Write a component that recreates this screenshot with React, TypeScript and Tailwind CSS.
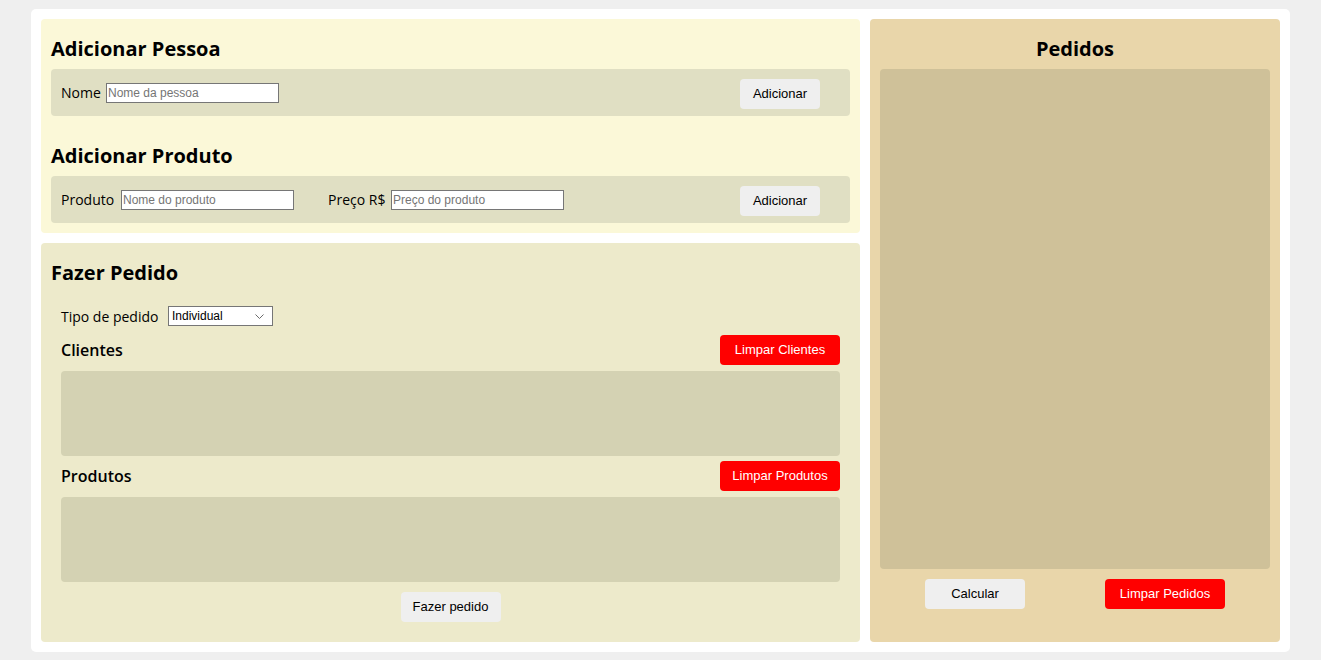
import React from 'react';

const font = { fontFamily: '"Open Sans", "Noto Sans", sans-serif' };

function Button({ label, red, width }: { label: string; red?: boolean; width: string }) {
  return (
    <button
      className={`h-[30px] ${width} shrink-0 rounded-[4px] text-[13px] font-['Liberation_Sans',Arial,sans-serif] ${
        red ? 'bg-[#ff0000] text-white' : 'bg-[#efefef] text-black'
      }`}
    >
      {label}
    </button>
  );
}

function TextInput({ placeholder }: { placeholder: string }) {
  return (
    <input
      type="text"
      placeholder={placeholder}
      className="h-[20px] w-[173px] border border-[#767676] bg-white px-[1px] text-[12px] font-['Liberation_Sans',Arial,sans-serif] text-black placeholder:text-[#757575] focus:outline-none"
    />
  );
}

export default function App() {
  return (
    <div className="min-h-[660px] bg-[#efefef] pt-[9px] pl-[31px]" style={font}>
      <div className="flex w-[1259px] gap-[10px] rounded-[5px] bg-white p-[10px]">
        {/* Left column */}
        <div className="flex w-[819px] flex-col gap-[10px]">
          <section className="rounded-[4px] bg-[#fbf8d8] p-[10px]">
            <h2 className="flex h-[40px] items-center text-[20px] font-bold">Adicionar Pessoa</h2>
            <div className="flex h-[47px] items-center rounded-[4px] bg-[#e0dfc3] pl-[10px] pr-[30px]">
              <label className="w-[45px] text-[14px]">Nome</label>
              <TextInput placeholder="Nome da pessoa" />
              <div className="ml-auto mt-[3px]">
                <Button label="Adicionar" width="w-[80px]" />
              </div>
            </div>

            <h2 className="mt-[20px] flex h-[40px] items-center text-[20px] font-bold">Adicionar Produto</h2>
            <div className="flex h-[47px] items-center rounded-[4px] bg-[#e0dfc3] pl-[10px] pr-[30px]">
              <label className="w-[60px] text-[14px]">Produto</label>
              <TextInput placeholder="Nome do produto" />
              <label className="ml-[34px] w-[63px] text-[14px]">Preço R$</label>
              <TextInput placeholder="Preço do produto" />
              <div className="ml-auto mt-[3px]">
                <Button label="Adicionar" width="w-[80px]" />
              </div>
            </div>
          </section>

          <section className="rounded-[4px] bg-[#edeacb] px-[10px] pt-[10px] pb-[20px]">
            <h2 className="flex h-[40px] items-center text-[20px] font-bold">Fazer Pedido</h2>
            <div className="flex flex-col px-[10px]">
              <div className="mt-[13px] flex h-[20px] items-center">
                <label className="w-[107px] text-[14px]">Tipo de pedido</label>
                <div className="relative flex">
                  <select className="block h-[20px] w-[105px] appearance-none border border-[#767676] bg-white pl-[3px] text-[12px] font-['Liberation_Sans',Arial,sans-serif]">
                    <option>Individual</option>
                    <option>Grupo</option>
                  </select>
                  <svg
                    className="pointer-events-none absolute right-[9px] top-[8px] h-[5px] w-[9px] text-[#6b6b6b]"
                    viewBox="0 0 9 5"
                    fill="none"
                    stroke="currentColor"
                    strokeWidth={1}
                  >
                    <path d="M0.5 0.5 4.5 4.5 8.5 0.5" />
                  </svg>
                </div>
              </div>

              <div className="mt-[9px] flex h-[30px] items-center justify-between">
                <h3 className="text-[16px] font-semibold">Clientes</h3>
                <Button label="Limpar Clientes" red width="w-[120px]" />
              </div>
              <div className="mt-[6px] h-[85px] rounded-[4px] bg-[#d4d2b3]" />

              <div className="mt-[5px] flex h-[30px] items-center justify-between">
                <h3 className="text-[16px] font-semibold">Produtos</h3>
                <Button label="Limpar Produtos" red width="w-[120px]" />
              </div>
              <div className="mt-[6px] h-[85px] rounded-[4px] bg-[#d4d2b3]" />

              <div className="mt-[10px] flex justify-center">
                <Button label="Fazer pedido" width="w-[100px]" />
              </div>
            </div>
          </section>
        </div>

        {/* Right column */}
        <section className="flex w-[410px] flex-col rounded-[4px] bg-[#e9d6aa] p-[10px]">
          <h2 className="flex h-[40px] items-center justify-center text-[20px] font-bold">Pedidos</h2>
          <div className="h-[500px] rounded-[4px] bg-[#cfc199]" />
          <div className="mt-[10px] flex gap-[80px] pl-[45px]">
            <Button label="Calcular" width="w-[100px]" />
            <Button label="Limpar Pedidos" red width="w-[120px]" />
          </div>
        </section>
      </div>
    </div>
  );
}
